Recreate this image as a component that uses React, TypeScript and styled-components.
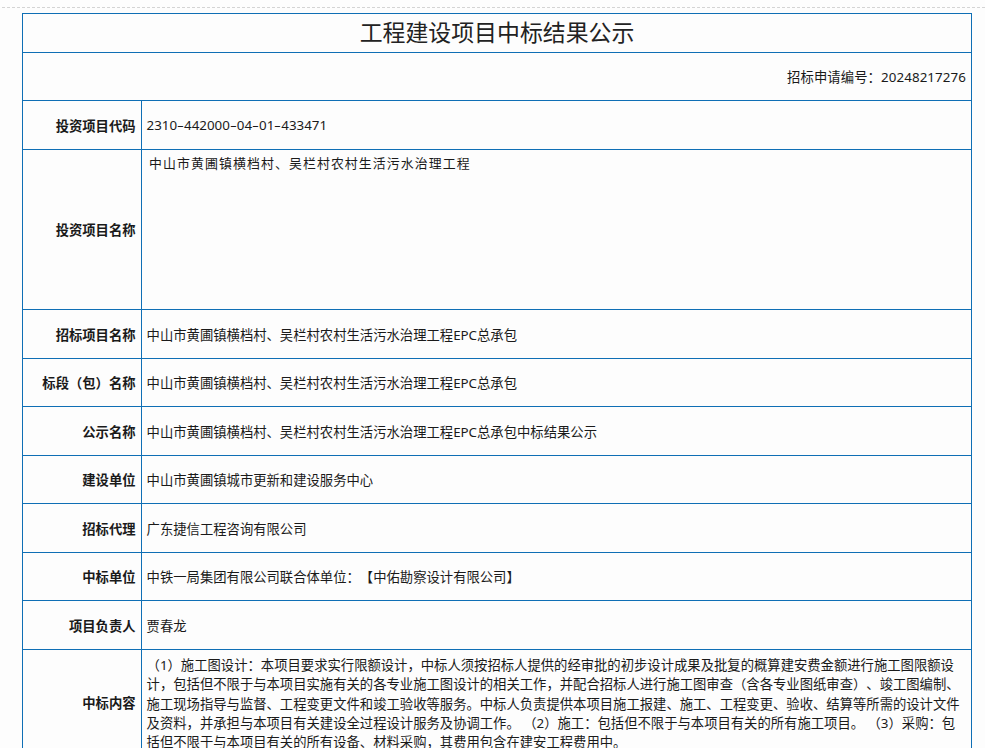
import React from "react";
import styled, { createGlobalStyle } from "styled-components";

const Global = createGlobalStyle`
  html, body { margin: 0; padding: 0; background: #fdfdfd; height: 748px; overflow: hidden; }
  body {
    font-family: "Noto Sans", "Noto Sans CJK SC", sans-serif;
    color: #1a1a1a;
    text-spacing-trim: space-all;
    text-autospace: no-autospace;
  }
`;

const Page = styled.div`
  padding: 7px 0 0 2px;
`;

const Rule = styled.div`
  border-top: 1px dashed #d4d4d4;
  margin-bottom: 5px;
`;

const Sheet = styled.table`
  width: 950px;
  margin-left: 20px;
  border-collapse: collapse;
  table-layout: fixed;
`;

const Row = styled.tr<{ $h: number }>`
  height: ${(p) => p.$h}px;
`;

const Cell = styled.td`
  border: 1px solid #0f6fb5;
  padding: 0;
  font-size: 13.33px;
`;

const TitleCell = styled(Cell)`
  text-align: center;
  font-size: 22.9px;
  line-height: 30px;
  color: #222;
`;

const NumberCell = styled(Cell)`
  text-align: right;
  padding: 0 5px 0 0;
  letter-spacing: 0.1px;
`;

const Label = styled(Cell)`
  text-align: right;
  font-weight: 700;
  padding-right: 5.4px;
`;

const Value = styled(Cell)`
  padding-left: 4.6px;
`;

const Dash = styled.span`
  display: inline-block;
  width: 7px;
  text-align: center;
  transform: scaleX(1.6);
`;

const NameValue = styled(Cell)`
  vertical-align: top;
  padding: 4px 0 0 7px;
  font-size: 12.9px;
  line-height: 18px;
  letter-spacing: 1.1px;
`;

const Body = styled(Cell)`
  padding: 6px 5px 0 4.6px;
  line-height: 19.33px;
  vertical-align: top;
`;

const rows: [string, string][] = [
  ["招标项目名称", "中山市黄圃镇横档村、吴栏村农村生活污水治理工程EPC总承包"],
  ["标段（包）名称", "中山市黄圃镇横档村、吴栏村农村生活污水治理工程EPC总承包"],
  ["公示名称", "中山市黄圃镇横档村、吴栏村农村生活污水治理工程EPC总承包中标结果公示"],
  ["建设单位", "中山市黄圃镇城市更新和建设服务中心"],
  ["招标代理", "广东捷信工程咨询有限公司"],
  ["中标单位", "中铁一局集团有限公司联合体单位：【中佑勘察设计有限公司】"],
  ["项目负责人", "贾春龙"],
];

const hs = [49, 48, 49, 48, 49, 48, 49];

const codeParts = "2310-442000-04-01-433471".split("-");

export default function App() {
  return (
    <Page lang="zh-CN">
      <Global />
      <Rule />
      <Sheet>
        <colgroup>
          <col style={{ width: 119 }} />
          <col />
        </colgroup>
        <tbody>
          <Row $h={39}>
            <TitleCell colSpan={2}>工程建设项目中标结果公示</TitleCell>
          </Row>
          <Row $h={48}>
            <NumberCell colSpan={2}>招标申请编号：20248217276</NumberCell>
          </Row>
          <Row $h={49}>
            <Label>投资项目代码</Label>
            <Value>
              {codeParts.map((part, i) => (
                <React.Fragment key={i}>
                  {i > 0 && <Dash>-</Dash>}
                  {part}
                </React.Fragment>
              ))}
            </Value>
          </Row>
          <Row $h={160}>
            <Label>投资项目名称</Label>
            <NameValue>中山市黄圃镇横档村、吴栏村农村生活污水治理工程</NameValue>
          </Row>
          {rows.map(([k, v], i) => (
            <Row key={k} $h={hs[i]}>
              <Label>{k}</Label>
              <Value>{v}</Value>
            </Row>
          ))}
          <Row $h={106}>
            <Label>中标内容</Label>
            <Body>
              （1）施工图设计：本项目要求实行限额设计，中标人须按招标人提供的经审批的初步设计成果及批复的概算建安费金额进行施工图限额设计，包括但不限于与本项目实施有关的各专业施工图设计的相关工作，并配合招标人进行施工图审查（含各专业图纸审查）、竣工图编制、施工现场指导与监督、工程变更文件和竣工验收等服务。中标人负责提供本项目施工报建、施工、工程变更、验收、结算等所需的设计文件及资料，并承担与本项目有关建设全过程设计服务及协调工作。 （2）施工：包括但不限于与本项目有关的所有施工项目。 （3）采购：包括但不限于与本项目有关的所有设备、材料采购，其费用包含在建安工程费用中。
            </Body>
          </Row>
        </tbody>
      </Sheet>
    </Page>
  );
}
